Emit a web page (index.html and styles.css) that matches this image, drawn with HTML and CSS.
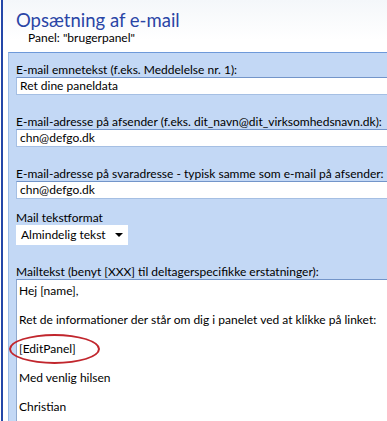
FILE: index.html
```html
<!DOCTYPE html>
<html lang="da">
<head>
  <meta charset="UTF-8" />
  <title>Opsætning af e-mail</title>
  <link rel="stylesheet" href="styles.css">
</head>
<body>
  <div class="window">
    <header class="head">
      <h1>Opsætning af e-mail</h1>
      <div class="sub">Panel: "brugerpanel"</div>
    </header>
    <div class="panel">
      <label class="lbl">E-mail emnetekst (f.eks. Meddelelse nr. 1):</label>
      <div class="field">Ret dine paneldata</div>

      <label class="lbl gap">E-mail-adresse på afsender (f.eks. dit_navn@dit_virksomhedsnavn.dk):</label>
      <div class="field">chn@defgo.dk</div>

      <label class="lbl gap">E-mail-adresse på svaradresse - typisk samme som e-mail på afsender:</label>
      <div class="field">chn@defgo.dk</div>

      <label class="lbl small-gap">Mail tekstformat</label>
      <div class="select">Almindelig tekst <span class="arrow"></span></div>

      <label class="lbl gap">Mailtekst (benyt [XXX] til deltagerspecifikke erstatninger):</label>
      <div class="textarea">
        <p>Hej [name],</p>
        <p>Ret de informationer der står om dig i panelet ved at klikke på linket:</p>
        <p class="marked">[EditPanel]<span class="ring"></span></p>
        <p>Med venlig hilsen</p>
        <p>Christian</p>
      </div>
    </div>
  </div>
</body>
</html>
```

FILE: styles.css
```css
* {
  box-sizing: border-box;
  margin: 0;
  padding: 0;
}
html, body {
  width: 387px;
  height: 421px;
  overflow: hidden;
  background: #fff;
}
body {
  font-family: Lato, 'Liberation Sans', sans-serif;
  font-size: 12px;
  color: #000;
}

.window {
  margin-left: 1px;
  border-left: 2px solid #2447a8;
  height: 421px;
  background: linear-gradient(180deg, #f4f7fa 0%, #fff 40px);
}

/* Header */
.head {
  height: 52px;
  padding: 11px 0 0 13px;
}
.head h1 {
  font-weight: normal;
  font-size: 18.5px;
  line-height: 19px;
  color: #2a45a6;
}
.sub {
  padding-left: 12px;
  line-height: 15px;
}

/* Blue panel with the form */
.panel {
  margin-left: 5px;
  border-top: 1px solid #6e99d9;
  border-left: 1px solid #9bbbe6;
  background: #c3d8f5;
  height: 369px;
  padding: 9px 0 0 7px;
  display: flex;
  flex-direction: column;
  align-items: flex-start;
  white-space: nowrap;
}
.lbl {
  display: block;
  line-height: 15px;
}
.lbl.gap {
  margin-top: 19px;
}
.lbl.small-gap {
  margin-top: 11px;
}
.field {
  width: 420px;
  height: 18px;
  background: #fff;
  border: 1px solid #a5bfe3;
  border-top-color: #7395c9;
  padding-left: 3px;
  line-height: 16px;
}
.select {
  width: 112px;
  height: 20px;
  background: #fff;
  padding-left: 5px;
  line-height: 20px;
  display: flex;
  align-items: center;
  gap: 9px;
}
.arrow {
  width: 0;
  height: 0;
  border-left: 4px solid transparent;
  border-right: 4px solid transparent;
  border-top: 4px solid #000;
}
.textarea {
  width: 420px;
  flex: 1;
  background: #fff;
  border-top: 1px solid #7395c9;
  border-left: 1px solid #8fa9cf;
  padding: 3px 0 0 2px;
}
.textarea p {
  line-height: 15px;
  margin-bottom: 14px;
}
.marked {
  position: relative;
}
.ring {
  position: absolute;
  left: -10px;
  top: -7px;
  width: 91px;
  height: 30px;
  border: 2px solid #c1262d;
  border-radius: 50%;
}
```
